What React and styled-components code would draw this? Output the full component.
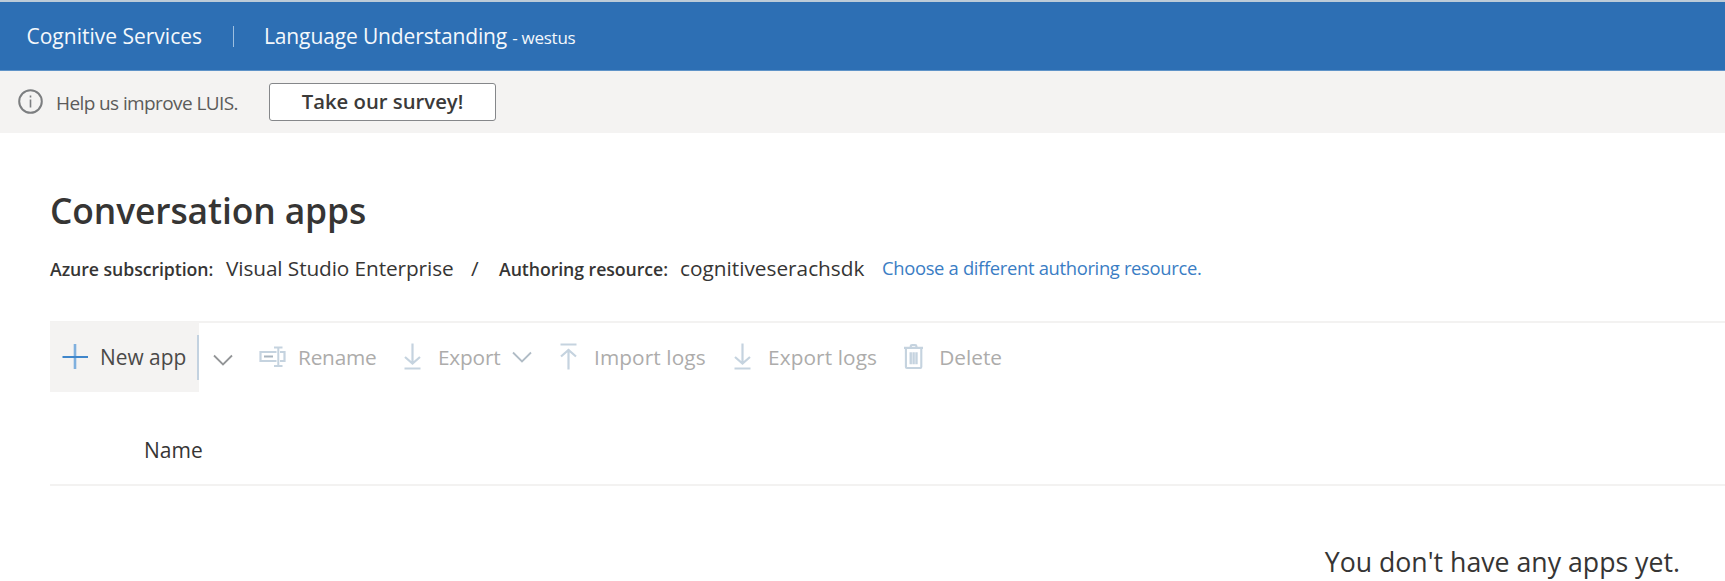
import React from 'react';
import styled, { createGlobalStyle } from 'styled-components';

const Global = createGlobalStyle`
  *, *::before, *::after { box-sizing: border-box; }
  body {
    margin: 0;
    background: #fff;
    color: #363534;
    font-family: 'Open Sans', 'Noto Sans', sans-serif;
  }
`;

const Page = styled.div`
  height: 581px;
  overflow: hidden;
`;

const Header = styled.header`
  display: flex;
  align-items: baseline;
  height: 71px;
  padding: 20px 0 0 26.5px;
  background: #2d6fb4;
  border-top: 2px solid #bccbd8;
  border-bottom: 1px solid #5f93c8;
  color: #f4f8fc;
  font-size: 21px;
  line-height: 29px;
  white-space: nowrap;
`;

const Brand = styled.span`
  width: 206.5px;
`;

const Service = styled.span`
  position: relative;
  padding-left: 31px;
  letter-spacing: -0.13px;
  &::before {
    content: '';
    position: absolute;
    left: 0;
    top: 4px;
    width: 1px;
    height: 21px;
    background: #9dbfe0;
  }
`;

const Region = styled.small`
  margin-left: 5px;
  font-size: 17px;
  letter-spacing: -0.25px;
`;

const Notice = styled.div`
  display: flex;
  align-items: center;
  height: 62px;
  padding-left: 18px;
  background: #f4f3f2;
`;

const NoticeText = styled.span`
  width: 213px;
  margin: 1px 0 0 12px;
  color: #5c5b5a;
  font-size: 19px;
  line-height: 26px;
  letter-spacing: -0.6px;
  white-space: nowrap;
`;

const SurveyButton = styled.button`
  width: 227px;
  height: 38px;
  margin-bottom: 1px;
  padding: 0 0 1px;
  border: 1.5px solid #85878a;
  border-radius: 3px;
  background: #fff;
  color: #3b3a39;
  font: 600 20.3px/30px 'Open Sans', 'Noto Sans', sans-serif;
  white-space: nowrap;
`;

const Main = styled.main`
  padding: 53px 0 0 50px;
`;

const Title = styled.h1`
  margin: 0;
  font-size: 35.4px;
  font-weight: 600;
  line-height: 48px;
  letter-spacing: -0.1px;
`;

const ResourceRow = styled.div`
  display: flex;
  align-items: baseline;
  height: 30px;
  margin-top: 19px;
  line-height: 30px;
  white-space: nowrap;
`;

const FieldName = styled.span`
  width: ${(p) => p.$width}px;
  font-size: 17.7px;
  font-weight: 600;
  letter-spacing: -0.06px;
`;

const FieldValue = styled.span`
  width: ${(p) => p.$width}px;
  font-size: 20.8px;
  letter-spacing: ${(p) => p.$spacing || 0}px;
`;

const ResourceLink = styled.a`
  align-self: flex-start;
  color: #3a7dc4;
  font-size: 18.4px;
  letter-spacing: -0.33px;
`;

const Toolbar = styled.div`
  display: flex;
  height: 70px;
  margin-top: 38px;
  border-top: 2px solid #f3f2f1;
`;

const NewAppButton = styled.button`
  display: flex;
  align-items: center;
  width: 149px;
  height: 70px;
  margin-top: -1px;
  padding: 0 0 0 12px;
  border: 0;
  background: #f4f3f2;
  color: #4a4948;
  font: 400 20.9px/30px 'Open Sans', 'Noto Sans', sans-serif;
  white-space: nowrap;
  svg { margin: 0 11px 1px 0; }
`;

const MenuButton = styled.button`
  display: flex;
  align-items: center;
  width: 62px;
  height: 45px;
  margin: 12px 0 0 -2px;
  padding: 5px 0 0 14px;
  border: 0;
  border-left: 2px solid #c3d2e0;
  background: none;
`;

const Action = styled.button`
  display: flex;
  align-items: center;
  width: ${(p) => p.$width}px;
  height: 67px;
  padding: 0;
  border: 0;
  background: none;
  color: #adacab;
  font: 400 20.8px/30px 'Open Sans', 'Noto Sans', sans-serif;
  letter-spacing: ${(p) => p.$spacing || 0}px;
  white-space: nowrap;
`;

const ActionLabel = styled.span`
  margin: 1px 12px 0 ${(p) => p.$gap}px;
`;

const ListHeader = styled.div`
  height: 95px;
  padding: 44px 0 0 94px;
  border-bottom: 2px solid #f3f2f1;
  font-size: 21px;
  font-weight: 500;
  line-height: 30px;
`;

const EmptyMessage = styled.p`
  margin: 57px 45px 0 0;
  text-align: right;
  font-size: 26.7px;
  line-height: 38px;
`;

const ICON = '#c5d3df';

const InfoIcon = () => (
  <svg width="26" height="26" viewBox="0 0 26 26" fill="none" stroke="#7c7e80">
    <circle cx="12.5" cy="12.5" r="11.3" strokeWidth="2" />
    <path d="M12.5 10.5v8M12.5 6.5v2" strokeWidth="1.6" />
  </svg>
);

const PlusIcon = () => (
  <svg width="27" height="27" viewBox="0 0 27 27" fill="none">
    <path d="M13 1v25" stroke="#7fb0de" strokeWidth="2.6" />
    <path d="M0.5 14h25.5" stroke="#3f86cb" strokeWidth="2" />
  </svg>
);

const Chevron = ({ color }) => (
  <svg width="20" height="12" viewBox="0 0 20 12" fill="none">
    <path d="M1 1.5l9 9 9-9" stroke={color} strokeWidth="1.8" />
  </svg>
);

const RenameIcon = () => (
  <svg width="27" height="22" viewBox="0 0 27 22" fill="none" stroke={ICON} strokeWidth="2.2">
    <path d="M17.5 6h-16v9h16M21 6h4.500v9H21" />
    <path d="M19.3 2v17.5M15 1.5h8.5M15 20h8.5" strokeWidth="2" />
    <path d="M5 10.5h9" stroke="#a9b4be" strokeWidth="2" />
  </svg>
);

const ArrowIcon = ({ up }) => (
  <svg width="17" height="27" viewBox="0 0 17 27" fill="none" stroke={ICON} strokeWidth="2.2">
    {up ? (
      <path d="M0.5 1.5h16M8.5 26.5V7M1 13.5l7.5-6.5 7.5 6.5" />
    ) : (
      <path d="M0.5 25.5h16M8.5 0.5v19.5M1 14l7.5 6.5 7.5-6.5" />
    )}
  </svg>
);

const TrashIcon = () => (
  <svg width="20" height="27" viewBox="0 0 20 27" fill="none" stroke={ICON} strokeWidth="2.2">
    <path d="M0 4.5h20M2 5v19.5q0 1 1 1h14q1 0 1-1V5M7 5V3q0-1.5 1.5-1.5h3Q13 1.5 13 3v2" />
    <path d="M7 9v12.5M10 9v12.5M13 9v12.5" strokeWidth="2.5" />
  </svg>
);

export default function App() {
  return (
    <Page>
      <Global />
      <Header>
        <Brand>Cognitive Services</Brand>
        <Service>
          Language Understanding
          <Region>- westus</Region>
        </Service>
      </Header>
      <Notice>
        <InfoIcon />
        <NoticeText>Help us improve LUIS.</NoticeText>
        <SurveyButton>Take our survey!</SurveyButton>
      </Notice>
      <Main>
        <Title>Conversation apps</Title>
        <ResourceRow>
          <FieldName $width={176}>Azure subscription:</FieldName>
          <FieldValue $width={245} $spacing={-0.1}>Visual Studio Enterprise</FieldValue>
          <FieldValue $width={28}>/</FieldValue>
          <FieldName $width={181}>Authoring resource:</FieldName>
          <FieldValue $width={202}>cognitiveserachsdk</FieldValue>
          <ResourceLink>Choose a different authoring resource.</ResourceLink>
        </ResourceRow>
        <Toolbar>
          <NewAppButton>
            <PlusIcon />
            New app
          </NewAppButton>
          <MenuButton aria-label="More app options">
            <Chevron color="#939597" />
          </MenuButton>
          <Action $width={145} $spacing={-0.2}>
            <RenameIcon />
            <ActionLabel $gap={12}>Rename</ActionLabel>
          </Action>
          <Action $width={156} $spacing={-0.2}>
            <ArrowIcon />
            <ActionLabel $gap={17}>Export</ActionLabel>
            <Chevron color="#b0bcc6" />
          </Action>
          <Action $width={174} $spacing={0.1}>
            <ArrowIcon up />
            <ActionLabel $gap={17}>Import logs</ActionLabel>
          </Action>
          <Action $width={170} $spacing={0.1}>
            <ArrowIcon />
            <ActionLabel $gap={17}>Export logs</ActionLabel>
          </Action>
          <Action $width={110}>
            <TrashIcon />
            <ActionLabel $gap={16}>Delete</ActionLabel>
          </Action>
        </Toolbar>
        <ListHeader>Name</ListHeader>
        <EmptyMessage>You don't have any apps yet.</EmptyMessage>
      </Main>
    </Page>
  );
}
